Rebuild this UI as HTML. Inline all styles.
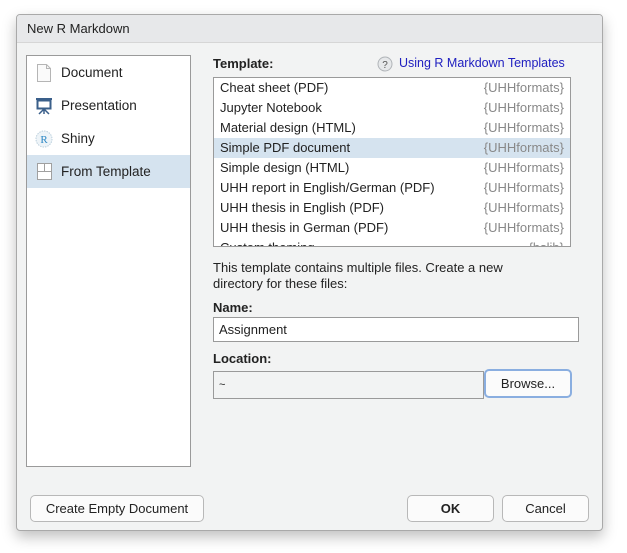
<!DOCTYPE html>
<html><head><style>
body{margin:0;width:627px;height:553px;background:#fff;font-family:"Liberation Sans",sans-serif;font-size:13px;color:#222;position:relative;overflow:hidden}
.dlg{position:absolute;left:16px;top:14px;width:585px;height:515px;background:#f2f3f3;border:1px solid #a9a9a9;border-radius:4px;box-shadow:0 6px 14px rgba(0,0,0,.25);overflow:hidden}
.title{position:absolute;left:0;top:0;right:0;height:27px;background:#e7e8ea;border-bottom:1px solid #d6d6d6;line-height:27px;padding-left:10px;font-size:13px}
.a{position:absolute}
.left{left:9px;top:40px;width:163px;height:410px;background:#fff;border:1px solid #9a9a9a}
.li{position:absolute;left:0;width:163px;height:33px;line-height:33px;padding-left:34px;box-sizing:border-box;font-size:13.5px}
.sel{background:#d5e3ef}
.tl{left:196px;top:62px;width:356px;height:168px;background:#fff;border:1px solid #9a9a9a;overflow:hidden}
.row{height:20px;line-height:20px;padding:0 6px;position:relative;font-size:13px}
.row span{position:absolute;right:6px;color:#888}
b{font-weight:bold}
.btn{position:absolute;height:25px;border:1px solid #b8b8b8;border-radius:5px;background:#fbfbfb;text-align:center;line-height:25px;font-size:13px}
</style></head><body>
<div class="dlg">
<div class="title">New R Markdown</div>
<div class="a left">
 <div class="li" style="top:0">Document</div>
 <svg class="a" style="left:9px;top:8px" width="16" height="18"><path d="M1.5 .5h9l4 4v13h-13z" fill="#fafafa" stroke="#b5b5b5"/><path d="M10.5 .5v4h4" fill="none" stroke="#b5b5b5"/></svg>
 <div class="li" style="top:33px">Presentation</div>
 <svg class="a" style="left:8px;top:41px" width="18" height="18"><rect x="1" y="1" width="16" height="2" fill="#3a5f8a"/><rect x="2.5" y="3.5" width="13" height="8" fill="#fff" stroke="#3a5f8a" stroke-width="2"/><path d="M9 12v5M9 12l-5 5M9 12l5 5" stroke="#3a5f8a" stroke-width="1.5"/></svg>
 <div class="li" style="top:66px">Shiny</div>
 <svg class="a" style="left:8px;top:74px" width="18" height="18"><circle cx="9" cy="9" r="8" fill="#eef4f8" stroke="#bcd0dd" stroke-dasharray="1.5 1"/><text x="9" y="13" font-family="Liberation Serif" font-size="11" fill="#2a86c4" text-anchor="middle">R</text></svg>
 <div class="li sel" style="top:99px">From Template</div>
 <svg class="a" style="left:10px;top:107px" width="15" height="17"><rect x=".5" y=".5" width="14" height="16" fill="#fff" stroke="#a0a0a0"/><path d="M.5 8.5h14M7.5 .5v8" stroke="#a0a0a0"/></svg>
</div>
<div class="a" style="left:196px;top:41px"><b>Template:</b></div>
<svg class="a" style="left:360px;top:41px" width="16" height="16"><circle cx="8" cy="8" r="7" fill="#e6e8ea" stroke="#b0b4b8"/><text x="8" y="12" font-size="10" fill="#555" text-anchor="middle" font-family="Liberation Sans">?</text></svg>
<div class="a" style="left:382px;top:41px;color:#2020c0;font-size:12.5px">Using R Markdown Templates</div>
<div class="a tl">
 <div class="row">Cheat sheet (PDF)<span>{UHHformats}</span></div>
 <div class="row">Jupyter Notebook<span>{UHHformats}</span></div>
 <div class="row">Material design (HTML)<span>{UHHformats}</span></div>
 <div class="row sel">Simple PDF document<span>{UHHformats}</span></div>
 <div class="row">Simple design (HTML)<span>{UHHformats}</span></div>
 <div class="row">UHH report in English/German (PDF)<span>{UHHformats}</span></div>
 <div class="row">UHH thesis in English (PDF)<span>{UHHformats}</span></div>
 <div class="row">UHH thesis in German (PDF)<span>{UHHformats}</span></div>
 <div class="row">Custom theming<span>{bslib}</span></div>
</div>
<div class="a" style="left:196px;top:245px;line-height:16px;width:340px">This template contains multiple files. Create a new directory for these files:</div>
<div class="a" style="left:196px;top:285px"><b>Name:</b></div>
<div class="a" style="left:196px;top:302px;height:23px;background:#fff;border:1px solid #9a9a9a;line-height:23px;padding-left:5px;width:359px">Assignment</div>
<div class="a" style="left:196px;top:336px"><b>Location:</b></div>
<div class="a" style="left:196px;top:356px;width:264px;height:26px;background:#f2f3f3;border:1px solid #9a9a9a;line-height:26px;padding-left:5px;font-size:11px">~</div>
<div class="btn" style="left:467px;top:354px;width:84px;height:25px;border:2px solid #8aaee0">Browse...</div>
<div class="btn" style="left:13px;top:480px;width:172px">Create Empty Document</div>
<div class="btn" style="left:390px;top:480px;width:85px"><b>OK</b></div>
<div class="btn" style="left:485px;top:480px;width:85px">Cancel</div>
</div>
</body></html>
